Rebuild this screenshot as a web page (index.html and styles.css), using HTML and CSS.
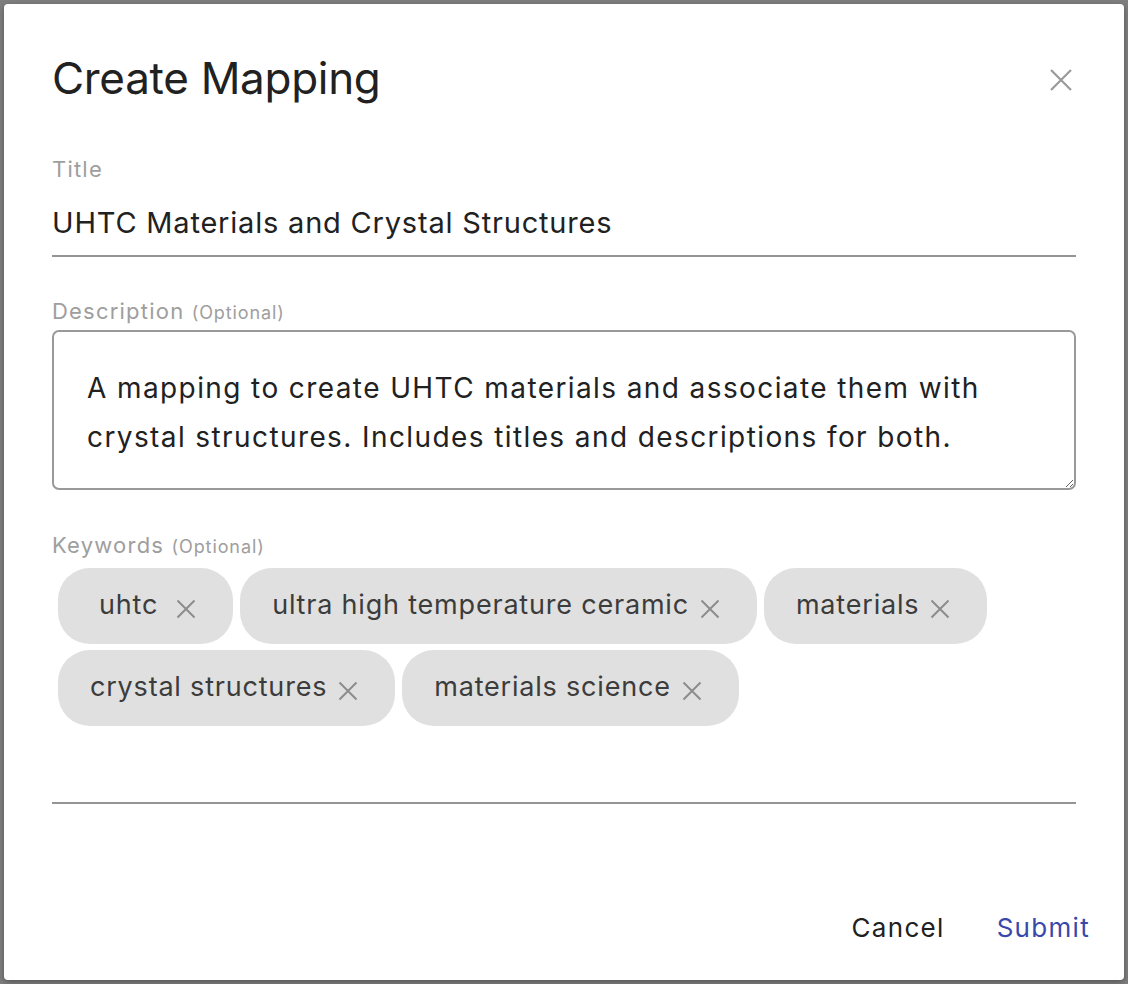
FILE: index.html
```html
<!DOCTYPE html>
<html>
<head>
<meta charset="utf-8">
<link rel="stylesheet" href="styles.css">
</head>
<body>
<div class="backdrop">
  <div class="modal">
    <div class="header">
      <h1 class="heading">Create Mapping</h1>
      <button class="close" aria-label="Close">
        <svg width="22" height="22" viewBox="0 0 22 22"><path d="M1 1L21 21M21 1L1 21" stroke="#9a9a9a" stroke-width="2.2" fill="none"/></svg>
      </button>
    </div>

    <div class="field field-title">
      <label class="label">Title</label>
      <div class="input">UHTC Materials and Crystal Structures</div>
    </div>

    <div class="field field-desc">
      <label class="label">Description <span class="opt">(Optional)</span></label>
      <textarea class="textarea">A mapping to create UHTC materials and associate them with crystal structures. Includes titles and descriptions for both.</textarea>
    </div>

    <div class="field field-kw">
      <label class="label">Keywords <span class="opt">(Optional)</span></label>
      <div class="chips-box">
        <div class="chips">
          <span class="chip chip-short"><span class="chip-text">uhtc</span><svg class="chip-x" width="20" height="20" viewBox="0 0 20 20"><path d="M1.5 1.5L18.5 18.5M18.5 1.5L1.5 18.5" stroke="#8c8c8c" stroke-width="2" fill="none"/></svg></span>
          <span class="chip"><span class="chip-text">ultra high temperature ceramic</span><svg class="chip-x" width="20" height="20" viewBox="0 0 20 20"><path d="M1.5 1.5L18.5 18.5M18.5 1.5L1.5 18.5" stroke="#8c8c8c" stroke-width="2" fill="none"/></svg></span>
          <span class="chip"><span class="chip-text">materials</span><svg class="chip-x" width="20" height="20" viewBox="0 0 20 20"><path d="M1.5 1.5L18.5 18.5M18.5 1.5L1.5 18.5" stroke="#8c8c8c" stroke-width="2" fill="none"/></svg></span>
          <span class="chip"><span class="chip-text">crystal structures</span><svg class="chip-x" width="20" height="20" viewBox="0 0 20 20"><path d="M1.5 1.5L18.5 18.5M18.5 1.5L1.5 18.5" stroke="#8c8c8c" stroke-width="2" fill="none"/></svg></span>
          <span class="chip"><span class="chip-text">materials science</span><svg class="chip-x" width="20" height="20" viewBox="0 0 20 20"><path d="M1.5 1.5L18.5 18.5M18.5 1.5L1.5 18.5" stroke="#8c8c8c" stroke-width="2" fill="none"/></svg></span>
        </div>
      </div>
    </div>

    <div class="actions">
      <button class="btn btn-cancel">Cancel</button>
      <button class="btn btn-submit">Submit</button>
    </div>
  </div>
</div>
</body>
</html>
```

FILE: styles.css
```css
* { box-sizing: border-box; }
html, body { margin: 0; padding: 0; }
body {
  font-family: Inter, "Noto Sans", "Liberation Sans", sans-serif;
  background: #7f7f7f;
  width: 1128px;
  height: 984px;
  overflow: hidden;
}
.backdrop {
  padding: 4px;
  height: 984px;
}
.modal {
  width: 1120px;
  height: 976px;
  background: #fff;
  border-radius: 4px;
  box-shadow: 0 2px 6px rgba(0,0,0,0.35);
  padding: 0 48px;
  display: flex;
  flex-direction: column;
  letter-spacing: 0.05em;
}
.header {
  display: flex;
  justify-content: space-between;
  align-items: center;
  padding-top: 44px;
}
.heading {
  margin: 0;
  font-size: 44px;
  font-weight: 400;
  line-height: 60px;
  color: #212121;
  letter-spacing: -0.3px;
}
.close {
  border: 0;
  background: none;
  padding: 0;
  margin-right: 4px;
  margin-top: 4px;
  width: 22px;
  height: 22px;
  display: flex;
}
.field { display: flex; flex-direction: column; }
.label {
  color: #9e9e9e;
  font-size: 22px;
  line-height: 28px;
  letter-spacing: 0.055em;
}
.opt { font-size: 18px; letter-spacing: 0.05em; }
.field-title { margin-top: 47px; }
.input {
  margin-top: 23px;
  font-size: 29px;
  line-height: 34px;
  color: #212121;
  padding-bottom: 15px;
  border-bottom: 2px solid #949494;
}
.field-desc { margin-top: 40px; }
.textarea {
  margin-top: 3px;
  width: 100%;
  height: 160px;
  border: 2px solid #999;
  border-radius: 7px;
  font-family: Inter, "Noto Sans", "Liberation Sans", sans-serif;
  font-size: 28px;
  letter-spacing: 0.05em;
  line-height: 49px;
  color: #212121;
  padding: 32px 33px 0 33px;
  resize: vertical;
  outline: none;
  overflow: hidden;
}
.field-kw { margin-top: 41px; }
.chips-box {
  margin-top: 7px;
  height: 236px;
  border-bottom: 2px solid #949494;
  padding-left: 6px;
}
.chips {
  display: flex;
  flex-wrap: wrap;
  gap: 6px 7px;
}
.chip {
  height: 76px;
  border-radius: 32px;
  background: #e0e0e0;
  display: inline-flex;
  align-items: center;
  padding: 0 37px 0 32px;
  font-size: 27px;
  color: #3c3c3c;
}
.chip-text { margin-top: -4px; }
.chip-x { margin-left: 11px; margin-top: 6px; flex: none; }
.chip-short { padding-left: 41px; padding-right: 37px; }
.chip-short .chip-x { margin-left: 18px; }
.actions {
  margin-top: auto;
  margin-bottom: 32px;
  display: flex;
  justify-content: flex-end;
  gap: 52px;
  margin-right: -14px;
}
.btn {
  border: 0;
  background: none;
  padding: 0;
  font-family: Inter, "Noto Sans", "Liberation Sans", sans-serif;
  font-size: 26px;
  letter-spacing: 0.05em;
  line-height: 40px;
}
.btn-cancel { color: #212121; }
.btn-submit { color: #3949ab; }
```
